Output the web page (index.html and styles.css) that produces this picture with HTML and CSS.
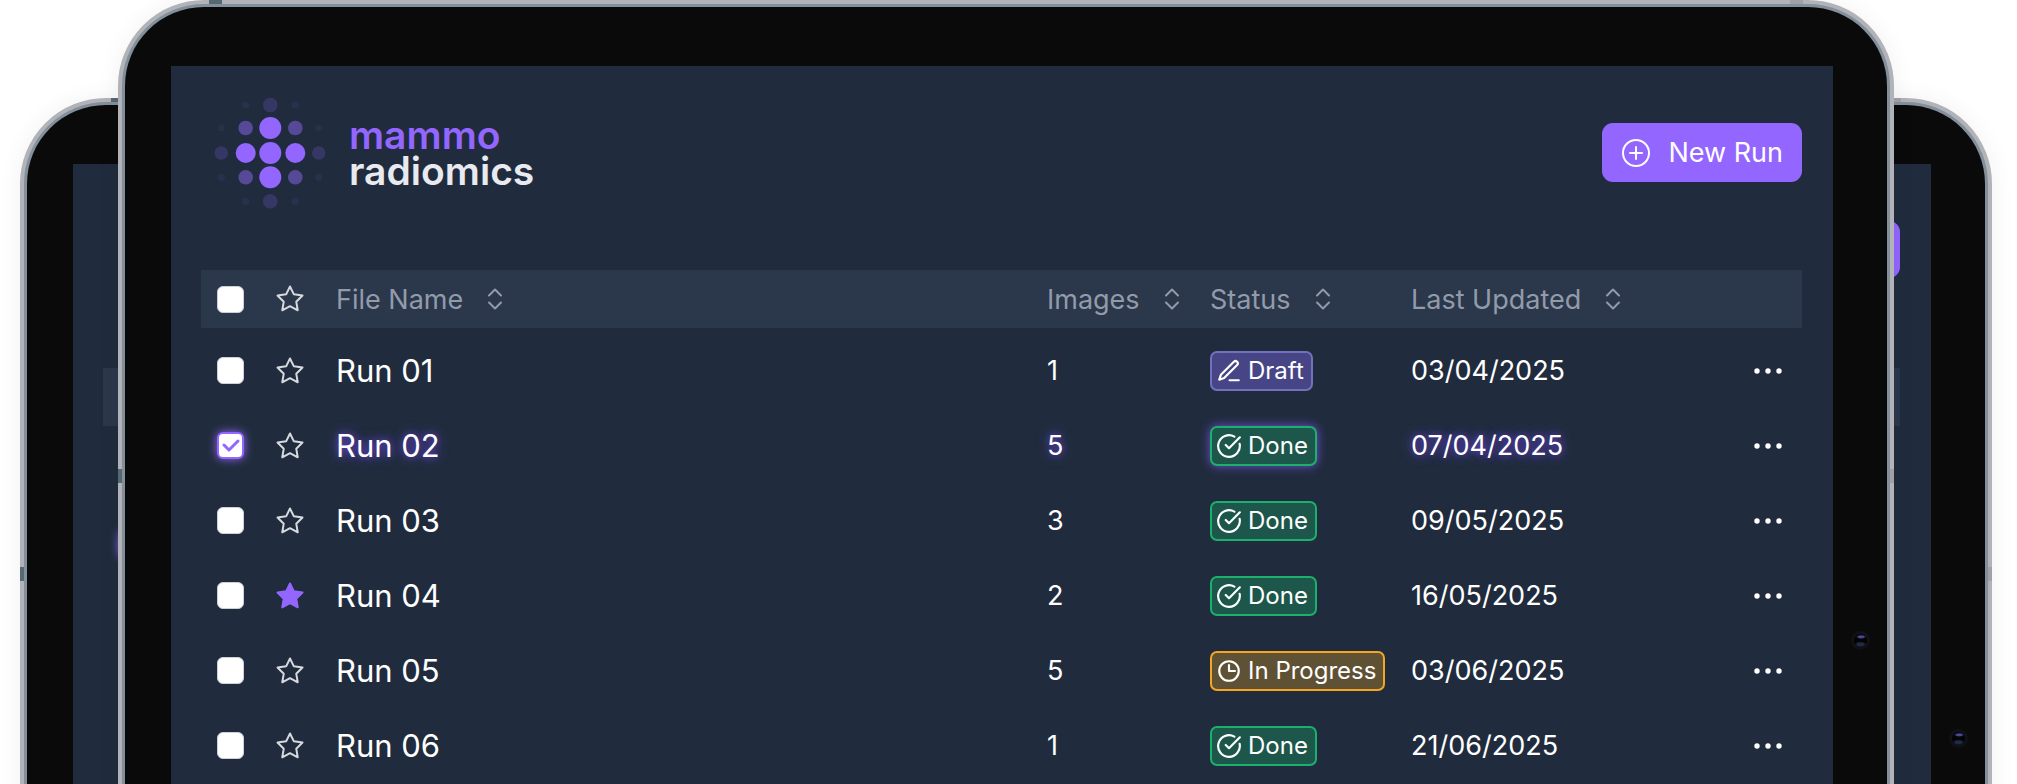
FILE: index.html
```html
<!DOCTYPE html>
<html lang="en">
<head>
    <meta charset="UTF-8">
    <meta name="viewport" content="width=device-width, initial-scale=1.0">
    <title>mammo radiomics</title>
    <link rel="stylesheet" href="styles.css">
</head>
<body>
    <!-- Shared icons -->
    <svg class="sprite" aria-hidden="true">
        <symbol id="icon-star" viewBox="0 0 24 24">
            <path d="M12 2l3.09 6.26L22 9.27l-5 4.87 1.18 6.88L12 17.77l-6.18 3.25L7 14.14 2 9.27l6.91-1.01z"/>
        </symbol>
        <symbol id="icon-sort" viewBox="0 0 16 24">
            <path d="M2 8.500L8 2.500l6 6M2 15.500l6 6 6-6"/>
        </symbol>
        <symbol id="icon-done" viewBox="0 0 24 24">
            <path d="M21.800 10A10 10 0 1 1 17 3.335M9 11l3 3L22 4"/>
        </symbol>
        <symbol id="icon-clock" viewBox="0 0 24 24">
            <circle cx="12" cy="12" r="9"/>
            <path d="M12 6.500V12h5.500"/>
        </symbol>
        <symbol id="icon-pen" viewBox="0 0 24 24">
            <path d="M12.500 20.500H21M16.500 3.500a2.100 2.100 0 0 1 3 3L7.500 18.500l-4.500 1.500 1.500-4.500z"/>
        </symbol>
        <symbol id="icon-more" viewBox="0 0 30 30">
            <circle cx="4" cy="15" r="2.700"/>
            <circle cx="15" cy="15" r="2.700"/>
            <circle cx="26" cy="15" r="2.700"/>
        </symbol>
    </svg>

    <div class="stage">
        <!-- Tablets in the background -->
        <div class="tablet tablet-back tablet-left" aria-hidden="true">
            <div class="bezel">
                <div class="screen">
                    <div class="ghost-button"></div>
                    <div class="ghost-head"></div>
                    <div class="ghost-check"></div>
                </div>
            </div>
            <i class="key key-top"></i>
            <i class="key key-side"></i>
        </div>
        <div class="tablet tablet-back tablet-right" aria-hidden="true">
            <div class="bezel">
                <div class="screen">
                    <div class="ghost-button"></div>
                    <div class="ghost-head"></div>
                </div>
            </div>
            <i class="key key-top-right"></i>
            <i class="key key-side-right"></i>
            <i class="camera"></i>
        </div>

        <!-- Main tablet -->
        <div class="tablet tablet-front">
            <div class="bezel">
                <main class="screen">
                    <header class="topbar">
                        <div class="brand">
                            <svg class="brand-mark" viewBox="0 0 112 112" aria-hidden="true">
                                <g fill="#9366ff">
                                    <circle cx="56.300" cy="56" r="11"/>
                                    <circle cx="56.300" cy="31" r="11"/>
                                    <circle cx="56.300" cy="80.300" r="11"/>
                                    <circle cx="31.700" cy="56" r="10"/>
                                    <circle cx="81.300" cy="56" r="10"/>
                                </g>
                                <g fill="#564a98">
                                    <circle cx="31.700" cy="31" r="7.300"/>
                                    <circle cx="81.300" cy="31" r="7.300"/>
                                    <circle cx="31.700" cy="80.300" r="7.300"/>
                                    <circle cx="81.300" cy="80.300" r="7.300"/>
                                </g>
                                <g fill="#373765">
                                    <circle cx="56.300" cy="8" r="7.300"/>
                                    <circle cx="56.300" cy="104.300" r="7.300"/>
                                    <circle cx="7.300" cy="56" r="6.700"/>
                                    <circle cx="104.700" cy="56" r="6.700"/>
                                </g>
                                <g fill="#28304b">
                                    <circle cx="31.700" cy="8" r="3.600"/>
                                    <circle cx="81.300" cy="8" r="3.600"/>
                                    <circle cx="7.300" cy="31" r="3.600"/>
                                    <circle cx="104.700" cy="31" r="3.600"/>
                                    <circle cx="7.300" cy="80.300" r="3.600"/>
                                    <circle cx="104.700" cy="80.300" r="3.600"/>
                                    <circle cx="31.700" cy="104.300" r="3.600"/>
                                    <circle cx="81.300" cy="104.300" r="3.600"/>
                                </g>
                            </svg>
                            <div class="brand-name">
                                <span class="brand-top">mammo</span>
                                <span>radiomics</span>
                            </div>
                        </div>
                        <button type="button" class="new-run">
                            <svg viewBox="0 0 30 30" aria-hidden="true">
                                <circle cx="15" cy="15" r="13"/>
                                <path d="M15 9v12M9 15h12"/>
                            </svg>
                            New Run
                        </button>
                    </header>

                    <table class="runs">
                        <colgroup>
                            <col class="col-check">
                            <col class="col-star">
                            <col>
                            <col class="col-images">
                            <col class="col-status">
                            <col class="col-updated">
                            <col class="col-more">
                        </colgroup>
                        <thead>
                            <tr>
                                <th class="center"><input type="checkbox" aria-label="Select all runs"></th>
                                <th class="center"><button type="button" class="star" aria-label="Sort by favourite"><svg><use href="#icon-star"/></svg></button></th>
                                <th class="name"><button type="button" class="sort">File Name <svg><use href="#icon-sort"/></svg></button></th>
                                <th><button type="button" class="sort">Images <svg><use href="#icon-sort"/></svg></button></th>
                                <th><button type="button" class="sort">Status <svg><use href="#icon-sort"/></svg></button></th>
                                <th><button type="button" class="sort">Last Updated <svg><use href="#icon-sort"/></svg></button></th>
                                <th></th>
                            </tr>
                        </thead>
                        <tbody>
                            <tr>
                                <td class="center"><input type="checkbox" aria-label="Select Run 01"></td>
                                <td class="center"><button type="button" class="star" aria-label="Favourite Run 01"><svg><use href="#icon-star"/></svg></button></td>
                                <td class="name">Run 01</td>
                                <td>1</td>
                                <td><span class="badge badge-draft"><svg><use href="#icon-pen"/></svg>Draft</span></td>
                                <td>03/04/2025</td>
                                <td class="center"><button type="button" class="more" aria-label="More for Run 01"><svg><use href="#icon-more"/></svg></button></td>
                            </tr>
                            <tr class="selected">
                                <td class="center"><input type="checkbox" aria-label="Select Run 02" checked></td>
                                <td class="center"><button type="button" class="star" aria-label="Favourite Run 02"><svg><use href="#icon-star"/></svg></button></td>
                                <td class="name">Run 02</td>
                                <td>5</td>
                                <td><span class="badge badge-done"><svg><use href="#icon-done"/></svg>Done</span></td>
                                <td>07/04/2025</td>
                                <td class="center"><button type="button" class="more" aria-label="More for Run 02"><svg><use href="#icon-more"/></svg></button></td>
                            </tr>
                            <tr>
                                <td class="center"><input type="checkbox" aria-label="Select Run 03"></td>
                                <td class="center"><button type="button" class="star" aria-label="Favourite Run 03"><svg><use href="#icon-star"/></svg></button></td>
                                <td class="name">Run 03</td>
                                <td>3</td>
                                <td><span class="badge badge-done"><svg><use href="#icon-done"/></svg>Done</span></td>
                                <td>09/05/2025</td>
                                <td class="center"><button type="button" class="more" aria-label="More for Run 03"><svg><use href="#icon-more"/></svg></button></td>
                            </tr>
                            <tr>
                                <td class="center"><input type="checkbox" aria-label="Select Run 04"></td>
                                <td class="center"><button type="button" class="star star-on" aria-label="Favourite Run 04" aria-pressed="true"><svg><use href="#icon-star"/></svg></button></td>
                                <td class="name">Run 04</td>
                                <td>2</td>
                                <td><span class="badge badge-done"><svg><use href="#icon-done"/></svg>Done</span></td>
                                <td>16/05/2025</td>
                                <td class="center"><button type="button" class="more" aria-label="More for Run 04"><svg><use href="#icon-more"/></svg></button></td>
                            </tr>
                            <tr>
                                <td class="center"><input type="checkbox" aria-label="Select Run 05"></td>
                                <td class="center"><button type="button" class="star" aria-label="Favourite Run 05"><svg><use href="#icon-star"/></svg></button></td>
                                <td class="name">Run 05</td>
                                <td>5</td>
                                <td><span class="badge badge-progress"><svg><use href="#icon-clock"/></svg>In Progress</span></td>
                                <td>03/06/2025</td>
                                <td class="center"><button type="button" class="more" aria-label="More for Run 05"><svg><use href="#icon-more"/></svg></button></td>
                            </tr>
                            <tr>
                                <td class="center"><input type="checkbox" aria-label="Select Run 06"></td>
                                <td class="center"><button type="button" class="star" aria-label="Favourite Run 06"><svg><use href="#icon-star"/></svg></button></td>
                                <td class="name">Run 06</td>
                                <td>1</td>
                                <td><span class="badge badge-done"><svg><use href="#icon-done"/></svg>Done</span></td>
                                <td>21/06/2025</td>
                                <td class="center"><button type="button" class="more" aria-label="More for Run 06"><svg><use href="#icon-more"/></svg></button></td>
                            </tr>
                        </tbody>
                    </table>
                </main>
            </div>
            <i class="key key-top"></i>
            <i class="key key-side"></i>
            <i class="key key-top-right"></i>
            <i class="key key-side-right"></i>
            <i class="camera"></i>
        </div>
    </div>
</body>
</html>
```
FILE: styles.css
```css
* {
    box-sizing: border-box;
}
body {
    margin: 0;
    background: #fff;
    color: #fff;
    font-family: Inter, "Liberation Sans", sans-serif;
    font-size: 27px;
}
button {
    margin: 0;
    padding: 0;
    border: 0;
    background: none;
    color: inherit;
    font: inherit;
    cursor: pointer;
}
svg {
    display: block;
    flex: none;
    fill: none;
    stroke: currentColor;
    stroke-width: 2;
    stroke-linecap: round;
    stroke-linejoin: round;
}
.sprite {
    display: none;
}

/* Tablets */
.stage {
    position: relative;
    height: 100vh;
    padding: 0 123px 0 118px;
    overflow: hidden;
}
.tablet {
    position: relative;
    border: 4px solid #b1b3b8;
    border-radius: 86px;
    background: #83909b;
    padding: 3px;
    box-shadow: 0 0 24px rgba(0, 0, 0, 0.06);
}
.tablet-back {
    position: absolute;
    top: 98px;
    height: 1200px;
}
.tablet-left {
    left: 20px;
    right: 221px;
}
.tablet-right {
    left: 216px;
    right: 25px;
}
.bezel {
    height: 100%;
    padding: 59px 54px 59px 46px;
    border-radius: 79px;
    background: #0a0a0a;
}
.screen {
    height: 100%;
    padding: 30px 31px 60px 30px;
    background: #202c3d;
}
.key {
    position: absolute;
    background: #566872;
}
.key-top,
.key-top-right {
    top: -4px;
    width: 13px;
    height: 4px;
}
.key-top {
    left: 87px;
}
.key-top-right {
    right: 87px;
    background: #9fa1a6;
}
.key-side,
.key-side-right {
    top: 465px;
    width: 4px;
    height: 14px;
}
.key-side {
    left: -4px;
}
.key-side-right {
    right: -4px;
    background: #9fa1a6;
}
.camera {
    position: absolute;
    top: 627px;
    right: 20px;
    width: 19px;
    height: 19px;
    border: 3px solid #101116;
    border-radius: 50%;
    background:
        radial-gradient(ellipse 5px 2px at 55% 22%, #4d4795 50%, transparent),
        radial-gradient(ellipse 6px 3px at 50% 80%, #202b48 50%, transparent),
        #030305;
}
.ghost-button {
    width: 199px;
    height: 57px;
    margin: 27px 0 0 auto;
    border-radius: 11px;
    background: #9366ff;
}
.ghost-head {
    height: 58px;
    margin-top: 90px;
    background: #2b374a;
}
.ghost-check {
    width: 27px;
    height: 27px;
    margin: 105px 0 0 16px;
    border-radius: 6px;
    background: #9366ff;
    box-shadow: 0 0 10px #9366ff;
}

/* Header */
.topbar {
    display: flex;
    align-items: center;
    justify-content: space-between;
    height: 113px;
    margin-bottom: 61px;
}
.brand {
    display: flex;
    align-items: center;
    gap: 23px;
    padding-left: 13px;
}
.brand-mark {
    width: 112px;
    height: 112px;
    stroke: none;
}
.brand-name {
    display: flex;
    flex-direction: column;
    color: #e8eaf0;
    font-size: 39px;
    font-weight: 600;
    line-height: 36px;
}
.brand-top {
    color: #9366ff;
}
.new-run {
    display: flex;
    align-items: center;
    gap: 17px;
    height: 59px;
    padding: 0 19px;
    border-radius: 11px;
    background: #9366ff;
}
.new-run svg {
    width: 30px;
    height: 30px;
}

/* Runs table */
.runs {
    width: 100%;
    border-collapse: collapse;
    table-layout: fixed;
}
.col-check {
    width: 59px;
}
.col-star {
    width: 60px;
}
.col-images {
    width: 163px;
}
.col-status {
    width: 201px;
}
.col-updated {
    width: 322px;
}
.col-more {
    width: 69px;
}
.runs th,
.runs td {
    padding: 0;
    text-align: left;
    vertical-align: middle;
}
.runs th {
    height: 58px;
    background: #2b374a;
    color: #929baa;
    font-weight: 400;
}
.runs td {
    height: 75px;
}
/* small gap between the header and the first row */
.runs tbody::before {
    content: "";
    display: block;
    height: 5px;
}
.runs .name {
    padding-left: 16px;
}
.runs td.name {
    font-size: 31px;
}
.runs .center > * {
    display: block;
    margin: 0 auto;
}
.sort {
    display: flex;
    align-items: center;
    gap: 24px;
}
.sort svg {
    width: 16px;
    height: 24px;
}
input[type="checkbox"] {
    appearance: none;
    width: 27px;
    height: 27px;
    border: 1px solid #cdd0d9;
    border-radius: 6px;
    background: #fff;
}
input[type="checkbox"]:checked {
    border: 2px solid #9366ff;
    background: #fff url("data:image/svg+xml,%3Csvg xmlns='http://www.w3.org/2000/svg' viewBox='0 0 23 23' fill='none' stroke='%239366ff' stroke-width='3' stroke-linecap='round' stroke-linejoin='round'%3E%3Cpath d='M5 11l5 5 9-9'/%3E%3C/svg%3E") center / 100% no-repeat;
    box-shadow: 0 0 10px #9366ff;
}
.star {
    color: #d6d9de;
}
.star svg {
    width: 30px;
    height: 30px;
    stroke-width: 1.6;
}
.star-on {
    color: #9366ff;
}
.star-on svg {
    fill: currentColor;
}
.more svg {
    width: 30px;
    height: 30px;
    fill: currentColor;
    stroke: none;
}

/* Status badges */
.badge {
    display: inline-flex;
    align-items: center;
    gap: 6px;
    height: 40px;
    padding: 0 7px 0 4px;
    border: 2px solid;
    border-radius: 7px;
    font-size: 24px;
    vertical-align: middle;
}
.badge svg {
    width: 26px;
    height: 26px;
    stroke: #fff;
}
.badge-draft {
    border-color: #7370bd;
    background: #474585;
}
.badge-done {
    border-color: #1bb06c;
    background: #1d574b;
}
.badge-progress {
    border-color: #f5a623;
    background: #5f5134;
}
.selected td {
    text-shadow: 0 0 12px #6a48d8, 0 0 6px #4a3a9c;
}
.selected .badge {
    box-shadow: 0 0 10px #7450e0;
    text-shadow: none;
}
```
